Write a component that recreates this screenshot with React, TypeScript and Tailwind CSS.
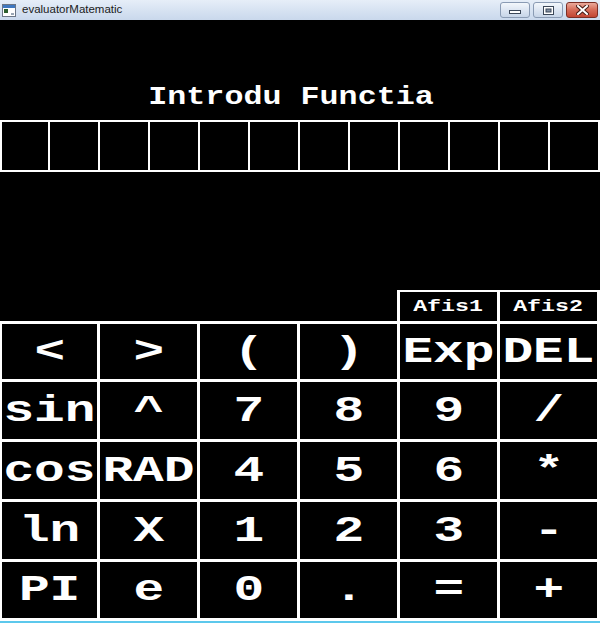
import React from 'react';

const keys: string[][] = [
    ['<', '>', '(', ')', 'Exp', 'DEL'],
    ['sin', '^', '7', '8', '9', '/'],
    ['cos', 'RAD', '4', '5', '6', '*'],
    ['ln', 'X', '1', '2', '3', '-'],
    ['PI', 'e', '0', '.', '=', '+'],
];

// row heights include the 3px bottom line
const rowHeights = ['h-[58px]', 'h-[60px]', 'h-[60px]', 'h-[60px]', 'h-[59px]'];

const mono = { fontFamily: '"Liberation Mono", "DejaVu Sans Mono", monospace' };

function TitleBar() {
    return (
        <div
            className="flex h-[20px] items-center bg-gradient-to-b from-[#e6eef8] to-[#c9d8ec]"
            style={{ fontFamily: '"Liberation Sans", Arial, sans-serif' }}
        >
            {/* app icon */}
            <svg width="14" height="13" viewBox="0 0 14 13" className="ml-[2px]">
                <rect x="0.5" y="0.5" width="13" height="12" fill="#ffffff" stroke="#6b7686" />
                <rect x="1" y="1" width="12" height="3" fill="#3f78c0" />
                <rect x="2" y="5" width="4" height="4" fill="#2c5f2e" />
                <rect x="9" y="9" width="3" height="2" fill="#9aa6b4" />
            </svg>
            <span className="ml-[6px] text-[11.5px] leading-none text-[#1b1b1b]">evaluatorMatematic</span>

            <div className="ml-auto mr-[2px] flex h-[16px] gap-[3px]">
                {/* minimize */}
                <div className="flex w-[30px] items-end justify-center rounded-[3px] border border-[#8a9bb4] bg-gradient-to-b from-[#f3f7fc] to-[#c7d5e8] pb-[3px]">
                    <svg width="12" height="4" viewBox="0 0 12 4">
                        <rect x="0.5" y="0.5" width="11" height="3" fill="#ffffff" stroke="#3b4758" />
                    </svg>
                </div>
                {/* maximize */}
                <div className="flex w-[30px] items-center justify-center rounded-[3px] border border-[#8a9bb4] bg-gradient-to-b from-[#f3f7fc] to-[#c7d5e8]">
                    <svg width="11" height="9" viewBox="0 0 11 9">
                        <rect x="0.5" y="0.5" width="10" height="8" fill="#ffffff" stroke="#3b4758" />
                        <rect x="3" y="3" width="5" height="3" fill="#8391a5" stroke="#3b4758" strokeWidth="1" />
                    </svg>
                </div>
                {/* close */}
                <div className="flex w-[32px] items-center justify-center rounded-[3px] border border-[#7c2e25] bg-gradient-to-b from-[#e9a99b] via-[#d56a57] to-[#c24532]">
                    <svg width="13" height="10" viewBox="0 0 13 10">
                        <path d="M2 1 L11 9 M11 1 L2 9" stroke="#4a1d17" strokeWidth="4" strokeLinecap="square" />
                        <path d="M2 1 L11 9 M11 1 L2 9" stroke="#ffffff" strokeWidth="2" strokeLinecap="square" />
                    </svg>
                </div>
            </div>
        </div>
    );
}

export default function App() {
    return (
        <div className="flex h-[623px] w-[600px] flex-col overflow-hidden bg-black">
            <TitleBar />

            {/* heading */}
            <div className="flex h-[100px] justify-center pr-[17px] pt-[64px]" style={mono}>
                <span className="inline-block h-fit scale-x-[1.22] whitespace-pre text-[26px] font-bold leading-none text-white">
                    Introdu Functia
                </span>
            </div>

            {/* input boxes */}
            <div className="flex h-[52px]">
                {Array.from({ length: 12 }).map((_, i) => (
                    <div
                        key={i}
                        className={
                            i === 0
                                ? 'w-[50px] border-y-2 border-l-2 border-r-2 border-white'
                                : 'w-[50px] border-y-2 border-r-2 border-white'
                        }
                    />
                ))}
            </div>

            <div className="h-[118px]" />

            {/* Afis buttons */}
            <div className="flex h-[31px] justify-end" style={mono}>
                <div className="flex w-[103px] items-center justify-center border-l-[3px] border-r-[3px] border-t-2 border-white">
                    <span className="inline-block scale-x-[1.45] text-[16px] font-bold leading-none text-white">Afis1</span>
                </div>
                <div className="flex w-[100px] items-center justify-center border-r-[3px] border-t-2 border-white">
                    <span className="inline-block scale-x-[1.45] text-[16px] font-bold leading-none text-white">Afis2</span>
                </div>
            </div>

            {/* keypad */}
            <div className="border-t-[3px] border-white" style={mono}>
                {keys.map((row, r) => (
                    <div key={r} className={`flex ${rowHeights[r]}`}>
                        {row.map((k, c) => (
                            <div
                                key={c}
                                className={
                                    c === 0
                                        ? 'flex w-[100px] items-center justify-center border-b-[3px] border-l-2 border-r-[3px] border-white'
                                        : 'flex w-[100px] items-center justify-center border-b-[3px] border-r-[3px] border-white'
                                }
                            >
                                <span className="inline-block translate-y-[1px] scale-x-[1.42] text-[36px] font-bold leading-none text-white">{k}</span>
                            </div>
                        ))}
                    </div>
                ))}
            </div>

            <div className="h-[2px] bg-[#5cc8ec]" />
        </div>
    );
}
